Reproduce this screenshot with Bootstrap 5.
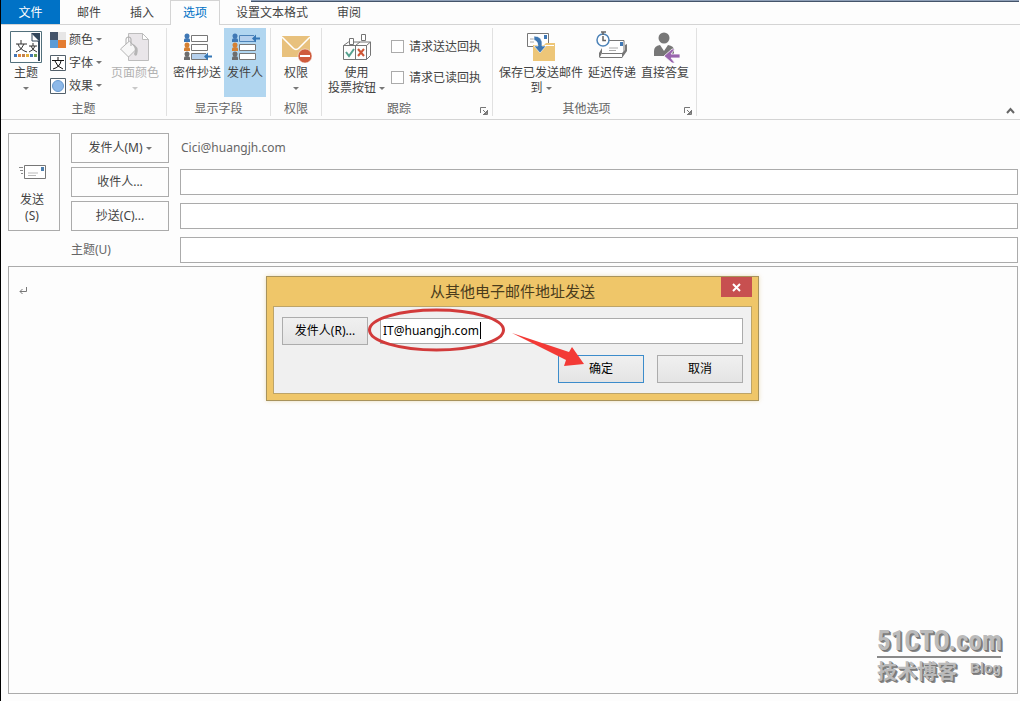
<!DOCTYPE html>
<html lang="zh-CN">
<head>
<meta charset="utf-8">
<meta name="viewport" content="width=device-width, initial-scale=1">
<title>邮件 - 选项</title>
<link href="https://cdn.jsdelivr.net/npm/bootstrap@5.3.0/dist/css/bootstrap.min.css" rel="stylesheet">
<style>
  body { font: 12px/16px "Noto Sans", "Noto Sans CJK SC", sans-serif; color: #444; background: #fdfdfd; }
  button, input { font: inherit; color: inherit; }
  button { background: none; border: 0; padding: 0; white-space: nowrap; }
  svg { display: block; flex: none; }
  .window { border-left: 1px solid #000; }

  .tabs { height: 25px; gap: 3px; border-bottom: 1px solid #d4d4d4; position: relative; }
  .tabs button { height: 24px; padding: 0 12px; border: 1px solid transparent; border-bottom: 0; }
  .tabs .file-tab { width: 59px; margin-right: 1px; background: #0072c6; color: #fff; }
  .tabs .current { height: 25px; color: #0072c6; background: #fdfdfd; border-color: #d4d4d4; }
  .backdrop-edge { left: 250px; right: 1px; top: 0; height: 2px; background: #8fa0b8; border-bottom: 1px solid #44546a; }

  .ribbon { padding-top: 3px; border-bottom: 1px solid #d4d4d4; position: relative; }
  .tool-group { height: 88px; margin-bottom: 3px; border-right: 1px solid #e1e1e1; }
  .theme-group { width: 166px; }
  .fields-group { width: 104px; }
  .rights-group { width: 51px; }
  .tracking-group { width: 171px; }
  .more-group { width: 204px; }
  .theme-group .tools { padding-left: 9px; }
  .fields-group .tools { padding-left: 6px; gap: 3px; }
  .tracking-group .tools { padding-left: 5px; gap: 5px; }
  .more-group .tools { padding-left: 6px; gap: 5px; }
  .tools { height: 69px; }
  .caption { height: 15px; margin-top: 4px; color: #666; text-align: center; }
  .launcher { width: 16px; }
  .big { height: 69px; padding-top: 3px; line-height: 15px; }
  .big svg.art { margin-bottom: 2px; }
  .theme-btn { width: 32px; }
  .theme-parts { width: 53px; }
  .vote-btn { width: 59px; }
  .on { background: #b1d6f0; width: 42px; }
  .faded { color: #b1b1b1; }
  .small-tool { height: 23px; gap: 3px; }
  .arrow { display: inline-block; border: 3px solid transparent; border-top-color: #777; border-bottom: 0; vertical-align: middle; }
  .faded .arrow { border-top-color: #c8c8c8; }
  .receipts { padding-top: 3px; }
  .receipt { height: 31px; gap: 5px; }
  .receipt input { appearance: none; width: 13px; height: 13px; margin: 0; border: 1px solid #ababab; background: #fff; }
  .collapse-btn { right: 5px; bottom: 5px; }

  .compose { padding: 13px 2px 7px 7px; }
  .header-grid { display: grid; grid-template-columns: 52px 98px 1fr; grid-auto-rows: 30px; gap: 4px 11px; align-items: center; margin-bottom: 1px; }
  .boxed { border: 1px solid #ababab; height: 100%; }
  .send { grid-row: 1 / 4; padding: 24px 4px 0 0; }
  .send svg { margin-bottom: 12px; }
  .subject-label { grid-column: 2; color: #666; }
  .line-input { width: 100%; height: 26px; border: 1px solid #ababab; background: #fff; padding: 0 4px; }
  .sender { color: #666; padding-left: 1px; }
  .message { border: 1px solid #ababab; position: relative; }
  .paragraph-mark { padding: 20px 0 0 10px; }

  .prompt { left: 257px; top: 9px; width: 493px; background: #efc669; border: 1px solid #a8935c; box-shadow: 0 0 4px rgba(200,160,60,.35); color: #000; padding: 0 6px 6px; }
  .prompt-title { height: 29px; font-size: 15px; line-height: 29px; color: #4a3c1c; }
  .close-btn { width: 31px; height: 20px; right: 6px; top: 0; background: #c75050; }
  .prompt-body { background: #f0f0f0; border: 1px solid #bda468; padding: 10px 8px; }
  .address-row { gap: 12px; margin-bottom: 10px; }
  .answer-row { gap: 13px; }
  .push { width: 86px; height: 28px; border: 1px solid #acacac; background: linear-gradient(#f0f0f0, #e4e4e4); }
  .push.default { border-color: #3c8ccb; }
  .address { height: 26px; border: 1px solid #ababab; background: #fff; padding: 0 2px 2px; }
  .text-caret { left: 213px; top: 45px; width: 1px; height: 17px; background: #000; }
  .markup { left: 100px; top: 30px; pointer-events: none; }

  .stamp { right: 16px; bottom: 7px; width: 124px; color: #bbb; font-weight: 700; text-shadow: 1px 1px 0 #777, 2px 2px 0 #888; }
  .stamp-name { font: 700 27px/29px "Liberation Sans Narrow", "Roboto Condensed", "Liberation Sans", sans-serif; border-bottom: 2px solid #8a8a8a; }
  .stamp-cn { font-size: 20px; line-height: 28px; }
  .stamp-blog { font: 700 14px/20px "Liberation Sans", sans-serif; }
</style>
</head>
<body>
<div class="window min-vh-100 d-flex flex-column">
  <nav class="tabs d-flex" aria-label="功能区">
    <div class="backdrop-edge position-absolute"></div>
    <button class="file-tab">文件</button>
    <button>邮件</button>
    <button>插入</button>
    <button class="current position-relative">选项</button>
    <button class="position-relative">设置文本格式</button>
    <button class="position-relative">审阅</button>
  </nav>

  <div class="ribbon d-flex">
    <section class="tool-group theme-group">
      <div class="tools d-flex">
        <button class="big theme-btn d-flex flex-column align-items-center me-2">
          <svg class="art" width="32" height="32" viewBox="0 0 32 32" fill="none"><path d="M.5.5h31v31H.5z" stroke="#52707c"/><path d="M2 2h20l8 8v20H2z" fill="#fff"/><path d="M21 2h9v28h-2V11z" fill="#33475b"/><path d="M22 3v7h7" fill="#fff" stroke="#33475b"/><path d="M11 9v4M6 13h11M14 13q-2 6-8 8M8 13q2 6 9 8M23 12v3M19 15h8M25 15q-1 4-6 6M21 15q1 4 6 6" stroke="#333"/><path d="M4 23h3v3H4z" fill="#4576b5"/><path d="M8 23h3v3H8z" fill="#e28a3c"/><path d="M12 23h3v3h-3z" fill="#c08050"/><path d="M16 23h3v3h-3z" fill="#e6af38"/><path d="M20 23h3v3h-3z" fill="#4576b5"/><path d="M24 23h3v3h-3z" fill="#6b9c4c"/></svg>
          <span>主题</span><span><i class="arrow"></i></span>
        </button>
        <div class="theme-parts d-flex flex-column me-2">
          <button class="small-tool d-flex align-items-center"><svg width="16" height="16"><path fill="#44546a" d="M0 0h8v8H0z"/><path fill="#e7e6e6" d="M8 0h8v8H8z"/><path fill="#5b9bd5" d="M0 8h8v8H0z"/><path fill="#e47c30" d="M8 8h8v8H8z"/></svg>颜色<i class="arrow"></i></button>
          <button class="small-tool d-flex align-items-center"><svg width="16" height="16" fill="none"><path d="M.5.5h15v15H.5z" fill="#fff" stroke="#52606b"/><path d="M8 2v3M2 5.500h12M11 6q-1 6-8 8M5 6q2 6 8 8" stroke="#111"/></svg>字体<i class="arrow"></i></button>
          <button class="small-tool d-flex align-items-center"><svg width="16" height="16"><path d="M.5.5h15v15H.5z" fill="#fff" stroke="#52606b"/><circle cx="8" cy="8" r="5.500" fill="#8db9e9" stroke="#6799cf"/></svg>效果<i class="arrow"></i></button>
        </div>
        <button class="big faded d-flex flex-column align-items-center">
          <svg class="art" width="32" height="32" viewBox="0 0 32 32" fill="none"><path d="M9.500 2.500h14l6 6v21h-20z" fill="#e9e6e9" stroke="#bdbdbd"/><path d="M23.500 2.500v6h6z" fill="#fff" stroke="#bdbdbd"/><path d="m1.500 18 9-8 7 8-8 8z" fill="#f7f7f7" stroke="#b5b5b5"/><path d="M7 13V8q0-2 2.500-2T12 8v7" stroke="#aaa"/><path d="M12 12q9 3 6 12-2 2-3-1 3-6-3-11z" fill="#b5b5b5"/></svg>
          <span>页面颜色</span><span><i class="arrow"></i></span>
        </button>
      </div>
      <div class="caption">主题</div>
    </section>

    <section class="tool-group fields-group">
      <div class="tools d-flex">
        <button class="big d-flex flex-column align-items-center">
          <svg class="art" width="32" height="32" viewBox="0 0 32 32"><g fill="#3f78b5"><circle cx="6" cy="5" r="2.500"/><path d="M3 11V9q0-2 3-2t3 2v2z"/></g><g fill="#d58032"><circle cx="6" cy="14" r="2.500"/><path d="M3 20v-2q0-2 3-2t3 2v2z"/></g><g fill="#6d6d6d"><circle cx="6" cy="23" r="2.500"/><path d="M3 29v-2q0-2 3-2t3 2v2z"/></g><path d="M10.500 4.500h16v6h-16zM10.500 13.500h16v6h-16z" fill="#fff" stroke="#777"/><path d="M25 22.500H10.500v6h16" fill="#b5d0ed" stroke="#777"/><path d="m23 25.500 4-4v3h4v2h-4v3z" fill="#3476b5"/></svg>
          <span>密件抄送</span>
        </button>
        <button class="big on d-flex flex-column align-items-center" aria-pressed="true">
          <svg class="art" width="32" height="32" viewBox="0 0 32 32"><g fill="#3f78b5"><circle cx="6" cy="5" r="2.500"/><path d="M3 11V9q0-2 3-2t3 2v2z"/></g><g fill="#d58032"><circle cx="6" cy="14" r="2.500"/><path d="M3 20v-2q0-2 3-2t3 2v2z"/></g><g fill="#6d6d6d"><circle cx="6" cy="23" r="2.500"/><path d="M3 29v-2q0-2 3-2t3 2v2z"/></g><path d="M10.500 13.500h16v6h-16zM10.500 22.500h16v6h-16z" fill="#fff" stroke="#777"/><path d="M25 4.500H10.500v6h16" fill="#b5d0ed" stroke="#4d83b8"/><path d="m23 7.500 4-4v3h4v2h-4v3z" fill="#3476b5"/></svg>
          <span>发件人</span>
        </button>
      </div>
      <div class="caption">显示字段</div>
    </section>

    <section class="tool-group rights-group">
      <div class="tools d-flex justify-content-center">
        <button class="big d-flex flex-column align-items-center">
          <svg class="art" width="32" height="32" viewBox="0 0 32 32" fill="none"><path d="M2 5h28v21H2z" fill="#e8c17d"/><path d="m2 6 11 11q3 3 6 0L30 6" stroke="#fff" stroke-width="1.500"/><circle cx="25" cy="25" r="7" fill="#cf5c3d" stroke="#fdfdfd" stroke-width=".5"/><path d="M20 25h10" stroke="#fff" stroke-width="2"/></svg>
          <span>权限</span><span><i class="arrow"></i></span>
        </button>
      </div>
      <div class="caption">权限</div>
    </section>

    <section class="tool-group tracking-group">
      <div class="tools d-flex">
        <button class="big vote-btn d-flex flex-column align-items-center">
          <svg class="art" width="32" height="32" viewBox="0 0 32 32" fill="none" stroke="#757575"><path d="M2.500 14.500 7.500 11h22l-4 3.500M25.500 14.500v14l4-4V11M2.500 14.500h23v14h-23zM14.500 14v14M14.500 14.500 19 11"/><path d="M8.500 7.500h4v6h-4zM20.500 3.500h4v6h-4z" fill="#fff"/><path d="m5 21 3 4 5-7" stroke="#55a18f" stroke-width="2"/><path d="m17 18 6 7m0-7-6 7" stroke="#cf5534" stroke-width="2"/></svg>
          <span>使用</span><span>投票按钮 <i class="arrow"></i></span>
        </button>
        <div class="receipts">
          <label class="receipt d-flex align-items-center"><input type="checkbox">请求送达回执</label>
          <label class="receipt d-flex align-items-center"><input type="checkbox">请求已读回执</label>
        </div>
      </div>
      <div class="caption d-flex"><span class="flex-fill">跟踪</span><button class="launcher d-flex align-items-center justify-content-center pt-1" aria-label="跟踪选项"><svg width="8" height="8" fill="none" stroke="#777"><path d="M.5 6V.5H6M3 3l3 3M7.500 3v4.500H3M6.500 4v2.500H4"/></svg></button></div>
    </section>

    <section class="tool-group more-group">
      <div class="tools d-flex">
        <button class="big d-flex flex-column align-items-center">
          <svg class="art" width="32" height="32" viewBox="0 0 32 32" fill="none"><path d="M2.500 2.500h21v13h-21z" fill="#fff" stroke="#777"/><path d="M19 4h3v4h-3z" fill="#3f78b5"/><path d="M5 8h4M5 11h4" stroke="#aaa"/><path d="M8 14h11l2-2h9v18H8z" fill="#edc678"/><path d="M20 14.500h9" stroke="#fff"/><path d="M9 5q9 0 8 10h4l-6 7-6-7h4q0-5-4-6z" fill="#3e77b2" stroke="#fff" stroke-width=".6"/></svg>
          <span>保存已发送邮件</span><span>到 <i class="arrow"></i></span>
        </button>
        <button class="big d-flex flex-column align-items-center">
          <svg class="art" width="32" height="32" viewBox="0 0 32 32" fill="none"><path d="M10 9.500h18v13H6" fill="#fff" stroke="#777"/><path d="M24 11h3v4h-3z" fill="#3f78b5"/><path d="M13 17h9M13 19.500h7" stroke="#aaa"/><path d="M6 17v5l-2 4H3v-4zM31 13v7l-5 7v-5l3-3v-5zM3 26h23v1H4z" fill="#777"/><circle cx="7" cy="9" r="6" fill="#fff" stroke="#4d83b8" stroke-width="1.500"/><path d="M5 1h5M7 1v3M7 5v4.500h3" stroke="#666" stroke-width="1.500"/></svg>
          <span>延迟传递</span>
        </button>
        <button class="big d-flex flex-column align-items-center">
          <svg class="art" width="32" height="32" viewBox="0 0 32 32"><circle cx="15" cy="7" r="5.500" fill="#777"/><path d="M5 25v-5q0-5 6-6l4 6 4-6q6 1 6 5v6z" fill="#777"/><path d="m15 25 8-7h3l-4 5h9v4h-9l4 5h-3z" fill="#9965ae" stroke="#fdfdfd" stroke-width=".8"/></svg>
          <span>直接答复</span>
        </button>
      </div>
      <div class="caption d-flex"><span class="flex-fill">其他选项</span><button class="launcher d-flex align-items-center justify-content-center pt-1" aria-label="其他选项设置"><svg width="8" height="8" fill="none" stroke="#777"><path d="M.5 6V.5H6M3 3l3 3M7.500 3v4.500H3M6.500 4v2.500H4"/></svg></button></div>
    </section>
    <button class="collapse-btn position-absolute" aria-label="折叠功能区"><svg width="9" height="7" fill="none" stroke="#666" stroke-width="2"><path d="m1 6 3.500-4L8 6"/></svg></button>
  </div>

  <main class="compose flex-grow-1 d-flex flex-column">
    <div class="header-grid">
      <button class="send boxed d-flex flex-column align-items-center justify-content-center">
        <svg width="30" height="16" viewBox="0 0 30 16" fill="none"><path d="M7.500 1.500h21v13h-21z" fill="#fff" stroke="#777"/><path d="M24 3h3v4h-3z" fill="#4e7fae"/><path d="M11 9h10M11 11.500h8" stroke="#bbb"/><path d="M2 3.500h4M3 6.500h3M4 9.500h2" stroke="#888"/></svg>
        <span>发送</span><span>(S)</span>
      </button>
      <button class="boxed">发件人(M) <i class="arrow"></i></button>
      <span class="sender">Cici@huangjh.com</span>
      <button class="boxed">收件人...</button>
      <input class="line-input" type="text" aria-label="收件人">
      <button class="boxed">抄送(C)...</button>
      <input class="line-input" type="text" aria-label="抄送">
      <label class="subject-label" for="subject">主题(U)</label>
      <input class="line-input" id="subject" type="text">
    </div>

    <div class="message flex-grow-1">
      <div class="paragraph-mark"><svg width="8" height="8" fill="none" stroke="#777"><path d="M7.500 0v4.500H1M3.500 2 1 4.500 3.500 7"/></svg></div>

      <div class="prompt position-absolute" role="dialog" aria-labelledby="prompt-title">
        <div class="prompt-title text-center"><span id="prompt-title">从其他电子邮件地址发送</span>
          <button class="close-btn position-absolute d-flex align-items-center justify-content-center" aria-label="关闭"><svg width="9" height="9" stroke="#fff" stroke-width="2"><path d="m1 1 7 7m0-7L1 8"/></svg></button>
        </div>
        <div class="prompt-body">
          <div class="address-row d-flex align-items-center">
            <button class="push">发件人(R)...</button>
            <input class="address flex-fill" type="text" value="IT@huangjh.com" aria-label="发件人">
          </div>
          <div class="answer-row d-flex justify-content-end">
            <button class="push default">确定</button>
            <button class="push">取消</button>
          </div>
        </div>
        <div class="text-caret position-absolute"></div>
        <svg class="markup position-absolute" width="220" height="62" viewBox="0 0 220 62"><ellipse cx="69.500" cy="23" rx="67" ry="20" fill="none" stroke="#d23b3b" stroke-width="3"/><path d="m145 26 57 19 3-5 12 17-20 2 2-6z" fill="#f33a36"/></svg>
      </div>

      <div class="stamp position-absolute">
        <div class="stamp-name">51CTO.com</div>
        <div class="d-flex justify-content-between"><span class="stamp-cn">技术博客</span><span class="stamp-blog">Blog</span></div>
      </div>
    </div>
  </main>
</div>
<script src="https://cdn.jsdelivr.net/npm/bootstrap@5.3.0/dist/js/bootstrap.bundle.min.js"></script>
</body>
</html>
